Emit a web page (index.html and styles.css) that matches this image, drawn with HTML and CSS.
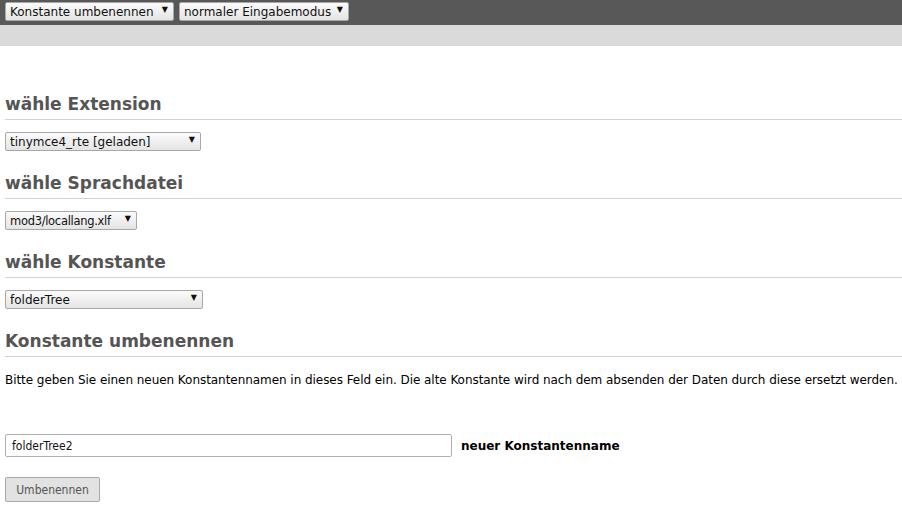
FILE: index.html
```html
<!DOCTYPE html>
<html lang="de">

<head>
    <meta charset="UTF-8" />
    <title>Konstante umbenennen</title>
    <link rel="stylesheet" href="styles.css">
</head>

<body>
    <!-- Top toolbar -->
    <div class="docheader">
        <span class="sel sel-mode">
            <select>
                <option>Konstante umbenennen</option>
            </select>
        </span>
        <span class="sel sel-input">
            <select>
                <option>normaler Eingabemodus</option>
            </select>
        </span>
    </div>
    <div class="subbar"></div>

    <main class="content">
        <h2>wähle Extension</h2>
        <span class="sel sel-ext">
            <select>
                <option>tinymce4_rte [geladen]</option>
            </select>
        </span>

        <h2>wähle Sprachdatei</h2>
        <span class="sel sel-lang">
            <select>
                <option>mod3/locallang.xlf</option>
            </select>
        </span>

        <h2>wähle Konstante</h2>
        <span class="sel sel-const">
            <select>
                <option>folderTree</option>
            </select>
        </span>

        <h2>Konstante umbenennen</h2>
        <p class="info">Bitte geben Sie einen neuen Konstantennamen in dieses Feld ein. Die alte Konstante wird nach dem absenden der Daten durch diese ersetzt werden.</p>

        <form class="rename">
            <div class="field">
                <input type="text" value="folderTree2">
                <label>neuer Konstantenname</label>
            </div>
            <button type="button">Umbenennen</button>
        </form>
    </main>
</body>

</html>
```

FILE: styles.css
```css
* {
    margin: 0;
    padding: 0;
    box-sizing: border-box;
}

body {
    font-family: 'DejaVu Sans', Verdana, sans-serif;
    font-size: 12px;
    color: #000;
    background: #fff;
    overflow: hidden;
}

/* Toolbar */
.docheader {
    height: 25px;
    background: #585858;
    display: flex;
    gap: 5px;
    padding: 2px 5px 0;
}

.subbar {
    height: 21px;
    background: #dadada;
}

/* Select boxes */
.sel {
    position: relative;
    display: inline-block;
    height: 19px;
}

.sel select {
    appearance: none;
    -webkit-appearance: none;
    width: 100%;
    height: 100%;
    font-family: inherit;
    font-size: 12px;
    color: #111;
    padding: 0 16px 0 4px;
    border: 1px solid #a8a8a8;
    border-radius: 2px;
    background: linear-gradient(#fbfbfb, #e4e4e4);
    outline: none;
}

.sel::after {
    content: "▼";
    position: absolute;
    right: 6px;
    top: 3px;
    font-size: 8px;
    color: #111;
    pointer-events: none;
}

.sel-mode { width: 169px; }
.sel-input { width: 170px; }
.sel-ext { width: 196px; }
.sel-lang { width: 132px; }
.sel-lang select { font-size: 11.5px; letter-spacing: -0.3px; }
.sel-const { width: 198px; }

/* Main content */
.content {
    padding: 47px 0 0 5px;
}

h2 {
    font-size: 17px;
    line-height: 22px;
    font-weight: bold;
    color: #555;
    padding-bottom: 4px;
    border-bottom: 1px solid #d2d2d2;
    margin: 21px 0 12px;
}

h2:first-child {
    margin-top: 0;
}

.info {
    margin-top: 15px;
    line-height: 16px;
    letter-spacing: -0.05px;
    white-space: nowrap;
}

.rename {
    margin-top: 46px;
}

.field {
    display: flex;
    align-items: center;
    gap: 9px;
}

.field input {
    width: 447px;
    height: 23px;
    font-family: 'DejaVu Sans Condensed', 'DejaVu Sans', sans-serif;
    font-size: 12px;
    padding: 0 6px;
    border: 1px solid #b0b0b0;
    border-radius: 2px;
    color: #111;
}

.field label {
    font-weight: bold;
    font-size: 12px;
}

.rename button {
    margin-top: 20px;
    height: 25px;
    width: 95px;
    font-family: 'DejaVu Sans Condensed', 'DejaVu Sans', sans-serif;
    font-size: 12px;
    color: #555;
    background: #e2e2e2;
    border: 1px solid #a8a8a8;
    border-radius: 2px;
}
```
